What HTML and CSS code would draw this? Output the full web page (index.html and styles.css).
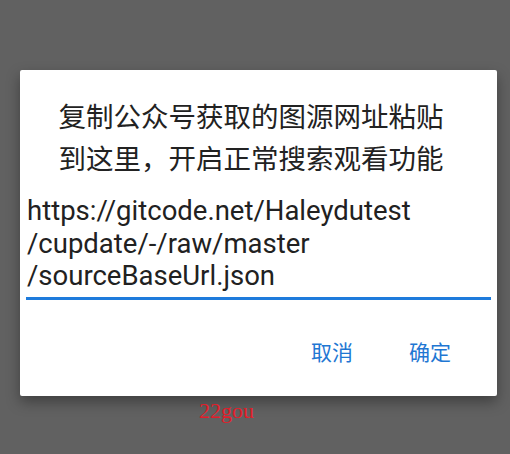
FILE: index.html
```html
<!DOCTYPE html>
<html lang="zh-CN">
<head>
    <meta charset="UTF-8">
    <meta name="viewport" content="width=device-width, initial-scale=1.0">
    <title>图源地址</title>
    <link rel="stylesheet" href="styles.css">
</head>
<body>
    <div class="dialog">
        <p class="dialog-title">复制公众号获取的图源网址粘贴<br>到这里，开启正常搜索观看功能</p>
        <div class="url-field">https://gitcode.net/Haleydutest<br>/cupdate/-/raw/master<br>/sourceBaseUrl.json</div>
        <div class="dialog-buttons">
            <a href="#" class="dialog-btn">取消</a>
            <a href="#" class="dialog-btn">确定</a>
        </div>
    </div>
    <p class="watermark">22gou</p>
</body>
</html>
```

FILE: styles.css
```css
body {
    margin: 0;
    height: 454px;
    background-color: #616161;
    font-family: Roboto, "Noto Sans CJK SC", sans-serif;
    overflow: hidden;
}

.dialog {
    margin: 70px 0 0 20px;
    width: 477px;
    height: 326px;
    box-sizing: border-box;
    background: #fff;
    border-radius: 2px;
    padding: 24px 6px 0 6px;
    box-shadow: 0 6px 14px rgba(0, 0, 0, 0.35);
}

.dialog-title {
    margin: 0;
    padding-right: 15px;
    text-align: center;
    font-family: "Noto Sans CJK SC", sans-serif;
    font-size: 27.5px;
    line-height: 42px;
    color: #222;
}

.url-field {
    margin-top: 17px;
    padding: 0 0 4px 1px;
    font-size: 27.5px;
    line-height: 32.5px;
    color: #212121;
    border-bottom: 3px solid #1e7bdc;
}

.dialog-buttons {
    display: flex;
    justify-content: flex-end;
    gap: 56px;
    padding: 37px 40px 0 0;
}

.dialog-btn {
    font-family: "Noto Sans CJK SC", sans-serif;
    font-size: 21px;
    line-height: 28px;
    color: #1f77d3;
    text-decoration: none;
}

.watermark {
    margin: 3px 0 0 199px;
    font-family: "Liberation Serif", serif;
    font-size: 22px;
    line-height: 24px;
    color: #e21d2a;
}
```
